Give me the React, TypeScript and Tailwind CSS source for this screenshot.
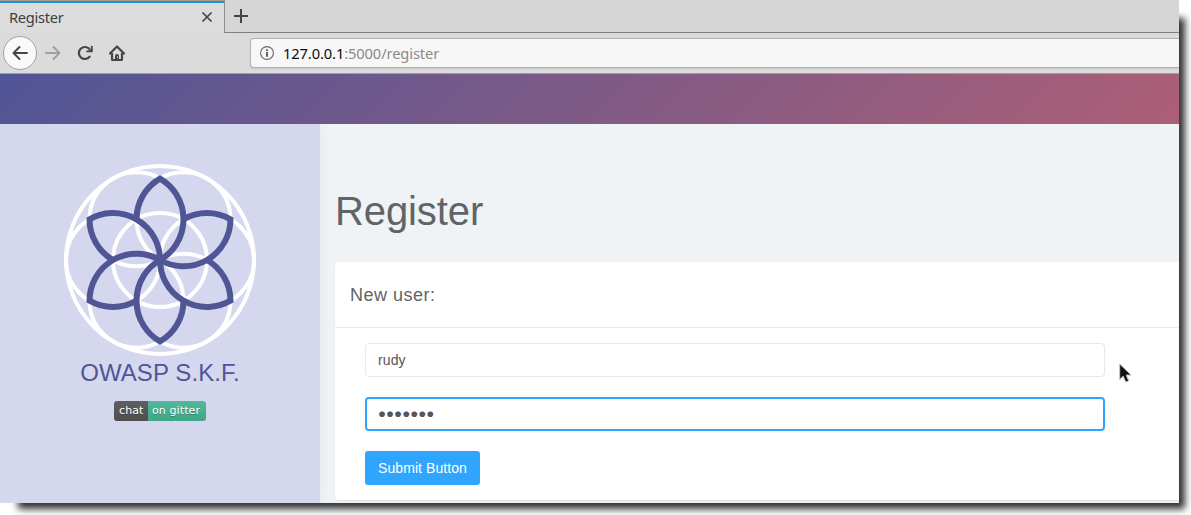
const CHROME_FONT = "font-['Noto_Sans',sans-serif]";

function Tabs() {
  return (
    <div className="flex h-[33px] shrink-0 bg-[#d6d6d6]">
      <div className="flex w-[225px] shrink-0 flex-col border-r border-t border-r-[#8e8e8e] border-t-[#a39a92] bg-[#dcdcdc]">
        <div className="h-[2px] bg-[#2292d0]" />
        <div className="flex flex-1 items-center justify-between pl-[9px] pr-[11px]">
          <span className="pb-[2px] text-[14.67px] leading-5 tracking-[-0.28px] text-[#3b3e3f]">Register</span>
          <svg width="12" height="12" viewBox="0 0 12 12" className="-mt-[3px]" fill="none" stroke="#464646" strokeWidth="1.7">
            <path d="M1.5 1.5l9 9M10.5 1.5l-9 9" />
          </svg>
        </div>
      </div>
      <div className="flex flex-1 border-b border-[#7f7f7f] pl-[9px] pt-[9px]">
        <svg width="14" height="14" viewBox="0 0 14 14" stroke="#464646" strokeWidth="2">
          <path d="M7 0v14M0 7h14" />
        </svg>
      </div>
    </div>
  );
}

function Toolbar() {
  return (
    <div className="flex h-[41px] shrink-0 items-center border-b border-[#a0a0a0] bg-[#dbdbdb] pl-[3px]">
      <div className="flex size-[34px] shrink-0 items-center justify-center rounded-full border border-[#a3a3a3] bg-[#f9f9f9]">
        <svg width="16" height="16" viewBox="0 0 16 16" fill="none" stroke="#464646" strokeWidth="2" strokeLinecap="round" strokeLinejoin="round">
          <path d="M15 8H1.5M7.5 2l-6 6 6 6" />
        </svg>
      </div>
      <svg className="ml-2 shrink-0" width="16" height="16" viewBox="0 0 16 16" fill="none" stroke="#a0a0a0" strokeWidth="2" strokeLinecap="round" strokeLinejoin="round">
        <path d="M1 8h13.5M8.500 2l6 6-6 6" />
      </svg>
      <svg className="ml-4 shrink-0" width="16" height="16" viewBox="0 0 16 16" fill="none">
        <path d="M12.600 11.700A6 6 0 1 1 12 3.600" stroke="#464646" strokeWidth="2.200" strokeLinecap="round" />
        <path d="M14.800 1.800v4.600h-4.600" stroke="#464646" strokeWidth="1.900" strokeLinecap="round" strokeLinejoin="round" />
        <path d="M14 3.500v2.500h-3z" fill="#464646" />
      </svg>
      <svg className="ml-4 shrink-0" width="16" height="16" viewBox="0 0 16 16" fill="none">
        <path d="M1 8.500L8 1.500l7 7" stroke="#464646" strokeWidth="2.200" strokeLinecap="round" strokeLinejoin="round" />
        <path d="M3 8v6.200q0 .8.800.8h8.400q.8 0 .8-.8V8" stroke="#464646" strokeWidth="2.200" />
        <path d="M6 15v-4q0-2 2-2t2 2v4z" fill="#464646" />
        <path d="M8.500 11.500v1.500" stroke="#dadada" strokeWidth="1" />
      </svg>
      <div className="ml-[125px] flex h-[30px] flex-1 items-center rounded-l-[4px] border border-r-0 border-[#b0b0b0] bg-[#f7f7f7] pl-[9px] shadow-[0_1px_2px_rgba(0,0,0,0.07)]">
        <svg width="14" height="14" viewBox="0 0 14 14" fill="none">
          <circle cx="7" cy="7" r="6.400" stroke="#666" strokeWidth="1.100" />
          <path d="M7 6v4.700M7 3.200v1.700" stroke="#555" strokeWidth="1.800" />
        </svg>
        <span className="ml-[9px] text-[14.67px] leading-5 tracking-[-0.1px] text-[#8a8a8a]">
          <span className="text-[#0c0c0c]">127.0.0.1</span>:5000/register
        </span>
      </div>
    </div>
  );
}

const RING_CENTRES = [
  [207, 160],
  [183.5, 119.3],
  [136.5, 119.3],
  [113, 160],
  [136.5, 200.7],
  [183.5, 200.7],
];

function FlowerLogo() {
  return (
    <svg width="192" height="192" viewBox="64 64 192 192" fill="none" className="shrink-0">
      <g stroke="#fff" strokeWidth="4">
        <circle cx="160" cy="160" r="94" />
        <circle cx="160" cy="160" r="47" />
        {RING_CENTRES.map(([x, y]) => (
          <circle key={`${x}-${y}`} cx={x} cy={y} r="47" />
        ))}
      </g>
      <g stroke="#505596" strokeWidth="6">
        {[0, 60, 120, 180, 240, 300].map((angle) => (
          <path
            key={angle}
            d="M136.500 119.300A47 47 0 0 1 160 78.600A47 47 0 0 1 160 160"
            transform={`rotate(${angle} 160 160)`}
          />
        ))}
      </g>
    </svg>
  );
}

function Sidebar() {
  return (
    <aside className="z-10 flex w-80 shrink-0 flex-col items-center bg-[#d5d7ee] pt-10 shadow-[0_0_12px_rgba(0,0,0,0.05)]">
      <FlowerLogo />
      <div className="mt-px text-[24px] leading-[32px] tracking-[0.08px] text-[#505596]">OWASP S.K.F.</div>
      <div className="mt-3 flex h-5 w-[92px] overflow-hidden rounded-[3px] font-['DejaVu_Sans',sans-serif] text-[11px] leading-5 tracking-[0.1px] text-white [text-shadow:0_1px_0_rgba(1,1,1,0.3)]">
        <span className="w-[34px] bg-linear-to-b from-[#5f5f5f] to-[#4e4e4e] pl-[5px]">chat</span>
        <span className="flex-1 whitespace-nowrap bg-linear-to-b from-[#51b899] to-[#40a688] pl-[4px]">on gitter</span>
      </div>
    </aside>
  );
}

function RegisterForm() {
  return (
    <main className="flex-1 bg-[#eff3f6] pl-[15px] pt-[60px]">
      <h1 className="h-[78px] text-[40px] leading-[54px] tracking-[-0.1px] text-[#616466]">Register</h1>
      <section className="h-[238px] rounded-l-[4px] bg-white shadow-[0_1px_2px_rgba(0,0,0,0.08)]">
        <h2 className="h-[66px] border-b border-[#e9ecee] pl-[15px] text-[18px] leading-[66px] tracking-[0.5px] text-[#616466]">
          New user:
        </h2>
        <form className="flex w-[770px] flex-col items-start pl-[30px] pt-[15px] text-[14px]">
          <div className="flex h-[34px] w-full items-center rounded-[4px] border border-[#e9e9e9] pl-3 tracking-[0.1px] text-[#555]">
            rudy
          </div>
          <div className="mt-5 flex h-[34px] w-full items-center rounded-[4px] border-2 border-[#30a5ff] pl-[11px] text-[13.33px] text-[#555]">
            ●●●●●●●
          </div>
          <button type="button" className="mt-5 h-[34px] w-[115px] whitespace-nowrap rounded-[3px] bg-[#30a5ff] text-[14px] tracking-[0.08px] text-white">
            Submit Button
          </button>
        </form>
      </section>
    </main>
  );
}

export default function App() {
  return (
    <div className="h-[515px] w-[1191px] overflow-hidden bg-white font-['Liberation_Sans',Arial,sans-serif]">
      <div className="relative flex h-[503px] w-[1179px] flex-col shadow-[12px_12px_7px_-6px_#333]">
        <div className={CHROME_FONT}>
          <Tabs />
          <Toolbar />
        </div>
        <div className="h-[50px] shrink-0 bg-[linear-gradient(135deg,#505596_0%,#ad5f76_100%)]" />
        <div className="flex min-h-0 flex-1 overflow-hidden">
          <Sidebar />
          <RegisterForm />
        </div>
        <svg className="absolute left-[1119px] top-[363px]" width="14" height="21" viewBox="0 0 14 21">
          <path d="M.7 1v15.500l3.500-3.300 2.500 5.900 3-1.300-2.500-5.700h5z" fill="#111" stroke="#c4c4c4" strokeWidth="1" />
        </svg>
      </div>
    </div>
  );
}
